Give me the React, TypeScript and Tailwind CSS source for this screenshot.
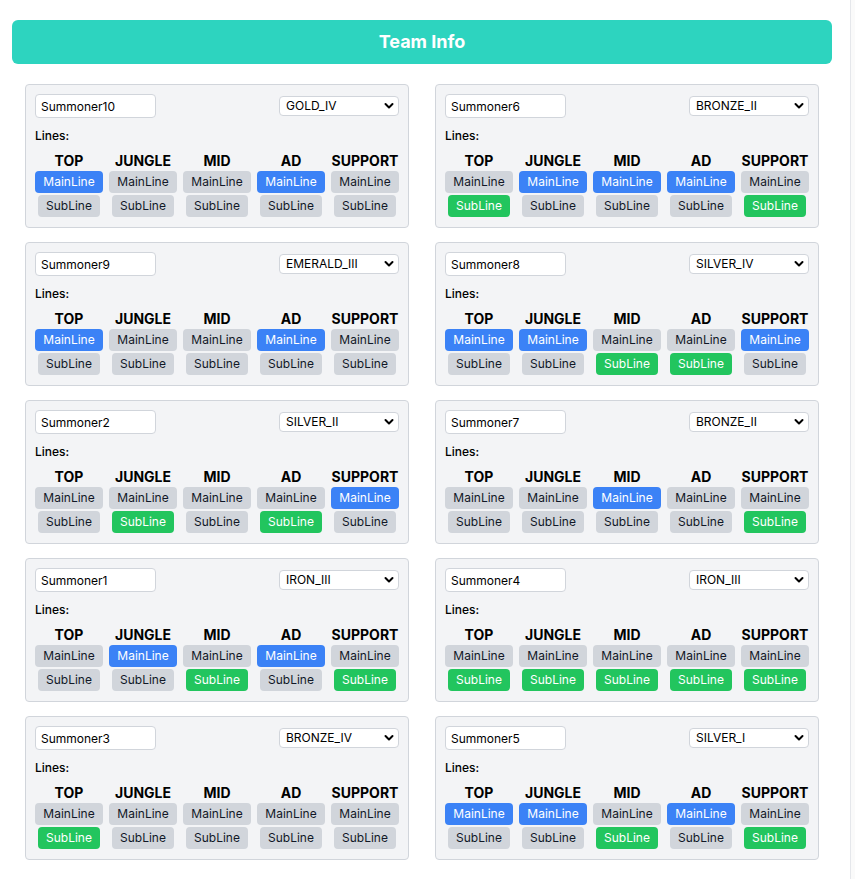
const ROLES = ["TOP", "JUNGLE", "MID", "AD", "SUPPORT"];

type Summoner = {
  name: string;
  tier: string;
  main: string[];
  sub: string[];
};

const summoners: Summoner[] = [
  { name: "Summoner10", tier: "GOLD_IV", main: ["TOP", "AD"], sub: [] },
  { name: "Summoner6", tier: "BRONZE_II", main: ["JUNGLE", "MID", "AD"], sub: ["TOP", "SUPPORT"] },
  { name: "Summoner9", tier: "EMERALD_III", main: ["TOP", "AD"], sub: [] },
  { name: "Summoner8", tier: "SILVER_IV", main: ["TOP", "JUNGLE", "SUPPORT"], sub: ["MID", "AD"] },
  { name: "Summoner2", tier: "SILVER_II", main: ["SUPPORT"], sub: ["JUNGLE", "AD"] },
  { name: "Summoner7", tier: "BRONZE_II", main: ["MID"], sub: ["SUPPORT"] },
  { name: "Summoner1", tier: "IRON_III", main: ["JUNGLE", "AD"], sub: ["MID", "SUPPORT"] },
  { name: "Summoner4", tier: "IRON_III", main: [], sub: ["TOP", "JUNGLE", "MID", "AD", "SUPPORT"] },
  { name: "Summoner3", tier: "BRONZE_IV", main: [], sub: ["TOP"] },
  { name: "Summoner5", tier: "SILVER_I", main: ["TOP", "JUNGLE", "AD"], sub: ["MID", "SUPPORT"] },
];

function SummonerCard({ s }: { s: Summoner }) {
  return (
    <div className="bg-[#f3f4f6] border border-[#d1d5db] rounded px-[9px] pt-[9px] pb-[10px]">
      <div className="flex items-center justify-between">
        <input
          defaultValue={s.name}
          className="block w-[121px] h-6 px-[5px] bg-white border border-[#d1d5db] rounded text-xs text-black outline-none"
        />
        {/* tier select, drawn with a custom chevron */}
        <div className="relative w-[120px] h-5">
          <select
            defaultValue={s.tier}
            className="block appearance-none w-full h-5 pl-[6px] pr-5 bg-white border border-[#d1d5db] rounded text-xs leading-4 text-black outline-none"
          >
            <option>{s.tier}</option>
          </select>
          <svg
            className="absolute right-[5px] top-[6px] pointer-events-none"
            width="10"
            height="8"
            viewBox="0 0 10 8"
          >
            <path d="M1.5 2 L5 5.5 L8.5 2" fill="none" stroke="black" strokeWidth="2" strokeLinecap="round" strokeLinejoin="round" />
          </svg>
        </div>
      </div>

      <p className="mt-2.5 text-xs font-medium leading-4 text-black">Lines:</p>

      <div className="mt-[7px] grid grid-cols-5 gap-x-[6px]">
        {ROLES.map((role) => {
          const isMain = s.main.includes(role);
          const isSub = s.sub.includes(role);
          return (
            <div key={role} className="flex flex-col items-center">
              <span className="h-5 text-sm leading-5 font-bold text-black">{role}</span>
              <button
                className={
                  isMain
                    ? "h-[22px] px-2 rounded text-xs bg-[#3b82f6] text-white"
                    : "h-[22px] px-2 rounded text-xs bg-[#d1d5db] text-[#111827]"
                }
              >
                MainLine
              </button>
              <button
                className={
                  isSub
                    ? "mt-0.5 h-[22px] px-2 rounded text-xs bg-[#22c55e] text-white"
                    : "mt-0.5 h-[22px] px-2 rounded text-xs bg-[#d1d5db] text-[#111827]"
                }
              >
                SubLine
              </button>
            </div>
          );
        })}
      </div>
    </div>
  );
}

export default function App() {
  return (
    <div className="flex min-h-screen bg-white font-['Inter',sans-serif]">
      <div className="w-[844px] px-3 pt-5 pb-4">
        <div className="h-11 rounded-md bg-[#2dd4bf] flex items-center justify-center">
          <h1 className="text-lg font-bold text-white">Team Info</h1>
        </div>

        <div className="mt-5 px-[13px] grid grid-cols-2 gap-x-[26px] gap-y-[14px]">
          {summoners.map((s) => (
            <SummonerCard key={s.name} s={s} />
          ))}
        </div>
      </div>
      <div className="flex-1" />
      <div className="w-[5px] border-l border-gray-200 bg-[#fafafa]" />
    </div>
  );
}
